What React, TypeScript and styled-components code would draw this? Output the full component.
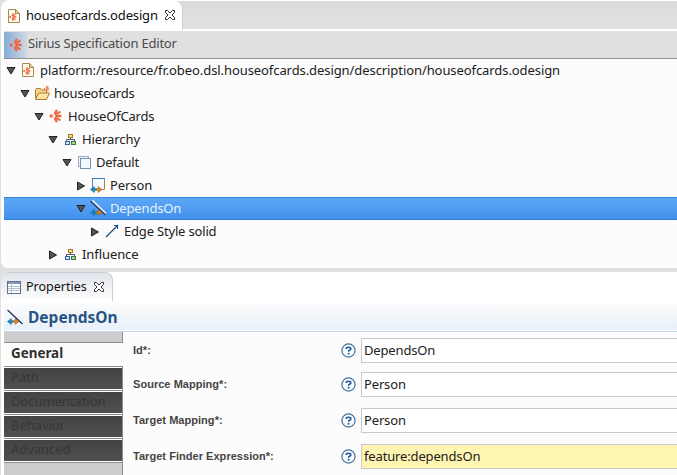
import React from "react";
import styled, { createGlobalStyle } from "styled-components";

const Global = createGlobalStyle`
  * { box-sizing: border-box; }
  html, body { margin: 0; padding: 0; background: #e0e0e0; overflow: hidden; }
  body { font-family: "Noto Sans", "Open Sans", sans-serif; font-size: 13px; color: #1f1f1f; }
  svg { display: block; flex: none; }
`;

const Window = styled.div`
  width: 677px;
  height: 475px;
  overflow: hidden;
  background: #e0e0e0;
  padding-left: 1px;
  display: flex;
  flex-direction: column;
  gap: 4px;
`;

const EditorPanel = styled.section`
  height: 268px;
  background: #fcfcfc;
  border-radius: 8px 0 0 7px;
  border: 1px solid #fff;
  border-width: 1px 0 1px 3px;
`;

const TabBar = styled.div`
  height: 30px;
  margin-left: -3px;
  display: flex;
  background: linear-gradient(#dadada, #e1e1e1);
  border-bottom: 2px solid #fff;
  border-radius: 8px 0 0 0;
`;

const EditorTab = styled.div`
  width: 182px;
  height: 29px;
  display: flex;
  align-items: center;
  padding-left: 5px;
  background: #fff;
  border-radius: 8px 8px 0 0;
  border: 1px solid #cfcfcf;
  border-width: 0 1px 0 0;
  color: #111;
`;

const Label = styled.span<{ $ls?: number; $gap?: number; $lift?: number }>`
  white-space: pre;
  line-height: 18px;
  letter-spacing: ${(p) => p.$ls ?? 0}px;
  margin-left: ${(p) => p.$gap ?? 4}px;
  padding-bottom: ${(p) => p.$lift ?? 2}px;
`;

const CloseButton = styled.span<{ $gap: number; $lift?: number }>`
  margin-left: ${(p) => p.$gap}px;
  padding-bottom: ${(p) => p.$lift ?? 0}px;
`;

const EditorTitle = styled.div`
  height: 28px;
  display: flex;
  align-items: center;
  background: #e0e0e0;
  border-bottom: 1px solid #8f8f8f;
  color: #4a4a4a;
`;

const TitleIcon = styled.div`
  width: 24px;
  height: 26px;
  padding: 5px 0 0 4px;
  background: linear-gradient(90deg, #86abd9, #d6dbe2);
`;

const TreeRow = styled.div<{ $depth: number; $selected?: boolean }>`
  height: 23px;
  display: flex;
  align-items: center;
  padding-left: ${(p) => 1.5 + p.$depth * 14}px;
  color: ${(p) => (p.$selected ? "#e6f1fd" : "#202020")};
  background: ${(p) => (p.$selected ? "linear-gradient(#5ea8f9, #4090ea)" : "transparent")};
  box-shadow: ${(p) => (p.$selected ? "inset 0 1px #3484d8, inset 0 -1px #2f7fd4" : "none")};
`;

const TreeIcon = styled.span`
  width: 16px;
  margin-left: 4.5px;
  padding-bottom: 1px;
`;

const PropertiesPanel = styled.section`
  flex: 1;
  background: #fcfcfc;
  border-radius: 8px 0 0 0;
  border-left: 3px solid #fff;
`;

const PropertiesTabBar = styled.div`
  height: 31px;
  margin-left: -3px;
  background: #fff;
  border-radius: 8px 0 0 0;
`;

const PropertiesTab = styled.div`
  width: 112px;
  height: 29px;
  display: flex;
  align-items: center;
  padding-left: 6px;
  border: 1px solid #c9cdd6;
  border-width: 1px 1px 0 0;
  border-radius: 8px 8px 0 0;
  background: linear-gradient(#e1e3ea, #fff);
  font-size: 12.5px;
  color: #111;
`;

const Heading = styled.div`
  height: 29px;
  display: flex;
  align-items: center;
  padding-left: 3px;
  background: linear-gradient(#fcfcfc, #e8f0f9 27px, #fff 27px);
  border-bottom: 1px solid #bdd8f2;
  font-size: 15.5px;
  font-weight: 700;
  color: #285585;
`;

const PropertiesBody = styled.div`
  display: flex;
  height: 143px;
`;

const Sidebar = styled.nav`
  width: 119px;
  background: #cdcdcd;
  border-right: 1px solid #8d8d8d;
`;

const SidebarTop = styled.div`
  height: 11px;
  border-bottom: 1px solid #8d8d8d;
`;

const GeneralItem = styled.div`
  height: 23px;
  width: 119px;
  padding: 0 0 3px 7px;
  display: flex;
  align-items: center;
  background: #fcfcfc;
  color: #303030;
  font-size: 13.4px;
  font-weight: 700;
`;

const SidebarItem = styled.div`
  height: 24px;
  padding: 0 0 4px 7px;
  display: flex;
  align-items: center;
  color: #363636;
  border-top: 1px solid #8d8d8d;
  background: linear-gradient(#fff 1px, #434343 1px, #505050 22px, #fff 22px);
  letter-spacing: -0.05px;
`;

const SidebarEnd = styled.div`
  border-top: 1px solid #8d8d8d;
`;

const Form = styled.div`
  flex: 1;
  display: flex;
  flex-direction: column;
  padding: 6px 0 0 10px;
`;

const FormRow = styled.div<{ $after?: number }>`
  height: 25px;
  flex: none;
  margin-bottom: ${(p) => p.$after ?? 11}px;
  display: grid;
  grid-template-columns: 207.5px 20.5px 1fr;
  align-items: center;
`;

const FieldLabel = styled.label`
  font: bold 11px/14px "Liberation Sans", Arial, sans-serif;
  letter-spacing: 0.04px;
  padding-bottom: 1px;
  color: #444;
  white-space: nowrap;
`;

const Field = styled.div<{ $expression?: boolean }>`
  height: 25px;
  display: flex;
  align-items: center;
  border: 1px solid #c9c9c9;
  border-right: 0;
  background: ${(p) => (p.$expression ? "#fff5b2" : "#fff")};
  color: #202020;
`;

const Close = () => (
  <svg width="12" height="12" viewBox="0 0 12 12" fill="#fff" stroke="#333" strokeWidth="1">
    <path d="M1.5 1.5h2l2.5 2.5l2.5-2.5h2v2L8 6l2.5 2.5v2h-2L6 8l-2.5 2.5h-2v-2L4 6L1.5 3.5z" />
  </svg>
);

const SiriusShapes = () => (
  <g fill="none" stroke="#ee663e">
    <circle cx="2.2" cy="8" r="1.7" fill="#ee663e" stroke="none" />
    <path d="M5.5 6L8 1.8M6.5 8H12.5M5.5 10L8 14.2" strokeWidth="2.3" />
    <path d="M6 6.8L11.5 3.6M6 9.2L11.5 12.4" strokeWidth="1.9" />
  </g>
);

const Sirius = () => (
  <svg width="16" height="16" viewBox="0 0 16 16"><g transform="translate(1)"><SiriusShapes /></g></svg>
);

const FileIcon = () => (
  <svg width="16" height="16" viewBox="0 0 16 16">
    <path d="M2.5 1.5h7l4 4v9h-11z" fill="#fffaf0" stroke="#a9894a" />
    <path d="M9.5 1.5v4h4z" fill="#e9d59f" stroke="#a9894a" />
    <g transform="translate(2.8 4.2) scale(.6)"><SiriusShapes /></g>
  </svg>
);

const FolderIcon = () => (
  <svg width="17" height="16" viewBox="0 0 17 16">
    <path d="M1.5 13V4.5l1-1h4l1 1.5h5V13z" fill="#f4d78e" stroke="#b27b29" />
    <path d="M1.5 14.5L4.5 8h11l-3 6.5z" fill="#fbe6a6" stroke="#b27b29" />
    <g transform="translate(9.5 0) scale(.46)"><SiriusShapes /></g>
  </svg>
);

const HierarchyIcon = () => (
  <svg width="16" height="16" viewBox="0 0 16 16">
    <path d="M8.5 6v3M4.5 11V8.5h8V11" fill="none" stroke="#44546f" />
    <rect x="6.5" y="3.5" width="4" height="3" fill="#f8dc78" stroke="#a67822" />
    <rect x="3.5" y="10.5" width="4" height="3" fill="#d5e4f7" stroke="#35639b" />
    <rect x="9.5" y="10.5" width="4" height="3" fill="#abd899" stroke="#397d3c" />
  </svg>
);

const LayersIcon = () => (
  <svg width="16" height="16" viewBox="0 0 16 16">
    <rect x="2.5" y="2.5" width="10" height="10" fill="#edf3fa" stroke="#9caec6" />
    <rect x="4.5" y="4.5" width="10" height="10" fill="#f2faff" stroke="#7890af" />
  </svg>
);

const MappingArrows = () => (
  <g>
    <path d="M.5 12.5l3.8-3v2.2h2v1.6h-2v2.2z" fill="#188ac6" stroke="#075f98" strokeWidth=".5" />
    <path d="M12 12.5l-3.8-3v2.2h-2v1.6h2v2.2z" fill="#d78720" stroke="#9b5508" strokeWidth=".5" />
  </g>
);

const ContainerIcon = () => (
  <svg width="16" height="16" viewBox="0 0 16 16">
    <path d="M2.5 12V1.5h12v11h-3" fill="#f6faff" stroke="#a88644" />
    <path d="M2 1.5h13" stroke="#3a79b7" />
    <path d="M2.5 2v10" stroke="#5c88af" />
    <MappingArrows />
  </svg>
);

const EdgeIcon = ({ selected = false }: { selected?: boolean }) => (
  <svg width="16" height="16" viewBox="0 0 16 16">
    {selected && <path d="M2 .5L16 14" stroke="#dbe6f5" strokeWidth="2.5" />}
    <path d="M.5 1L15.5 15" stroke="#222f67" strokeWidth="1.3" />
    <MappingArrows />
  </svg>
);

const StyleIcon = () => (
  <svg width="16" height="16" viewBox="0 0 16 16" fill="none" stroke="#164d83">
    <path d="M2 14L14 2" strokeWidth="1.2" /><path d="M10 2.5h3.5V6" />
  </svg>
);

const TableIcon = () => (
  <svg width="14" height="13" viewBox="0 0 14 13">
    <rect x=".5" y=".5" width="13" height="12" fill="#fff" stroke="#617393" />
    <path d="M1 2h12" stroke="#8196b9" strokeWidth="2" />
    <path d="M1 5.5h12M1 7.5h12M1 9.5h12M4.5 2v10" stroke="#b2bdcd" />
  </svg>
);

const Expander = ({ open }: { open: boolean }) => (
  <svg width="10" height="12" viewBox="0 0 10 12">
    <path d={open ? "M1 2.5h8L5 9z" : "M1.5 2v8l7-4z"} fill="#555" stroke="#222" />
  </svg>
);

const Help = () => (
  <svg width="15" height="15" viewBox="0 0 15 15">
    <circle cx="7.5" cy="7.5" r="6.6" fill="#fafdff" stroke="#417199" strokeWidth="1.2" />
    <path d="M5.2 5.9Q5.2 4.3 7.5 4.3T9.8 5.9Q9.8 6.8 8.4 7.3Q7.6 7.7 7.6 8.7" fill="none" stroke="#225b96" strokeWidth="1.6" />
    <circle cx="7.6" cy="10.7" r="1" fill="#225b96" />
  </svg>
);

type Node = { text: string; depth: number; open: boolean; icon: React.ReactNode; selected?: boolean; ls?: number };
const nodes: Node[] = [
  { text: "platform:/resource/fr.obeo.dsl.houseofcards.design/description/houseofcards.odesign", depth: 0, open: true, icon: <FileIcon /> },
  { text: "houseofcards", depth: 1, open: true, icon: <FolderIcon />, ls: -0.18 },
  { text: "HouseOfCards", depth: 2, open: true, icon: <Sirius />, ls: -0.18 },
  { text: "Hierarchy", depth: 3, open: true, icon: <HierarchyIcon /> },
  { text: "Default", depth: 4, open: true, icon: <LayersIcon />, ls: -0.25 },
  { text: "Person", depth: 5, open: false, icon: <ContainerIcon /> },
  { text: "DependsOn", depth: 5, open: true, icon: <EdgeIcon selected />, selected: true, ls: -0.15 },
  { text: "Edge Style solid", depth: 6, open: false, icon: <StyleIcon />, ls: -0.18 },
  { text: "Influence", depth: 3, open: false, icon: <HierarchyIcon /> },
];

const fields = [
  { label: "Id*:", value: "DependsOn", after: 9 },
  { label: "Source Mapping*:", value: "Person" },
  { label: "Target Mapping*:", value: "Person" },
  { label: "Target Finder Expression*:", value: "feature:dependsOn", expression: true },
];

export default function App() {
  return (
    <Window>
      <Global />
      <EditorPanel>
        <TabBar>
          <EditorTab>
            <FileIcon />
            <Label $gap={4} $ls={-0.16}>houseofcards.odesign</Label>
            <CloseButton $gap={6} $lift={2}><Close /></CloseButton>
          </EditorTab>
        </TabBar>
        <EditorTitle>
          <TitleIcon><Sirius /></TitleIcon>
          <Label $gap={0} $ls={-0.2} $lift={3}>Sirius Specification Editor</Label>
        </EditorTitle>
        {nodes.map((n) => (
          <TreeRow key={n.text} $depth={n.depth} $selected={n.selected}>
            <Expander open={n.open} /><TreeIcon>{n.icon}</TreeIcon><Label $ls={n.ls ?? -0.08}>{n.text}</Label>
          </TreeRow>
        ))}
      </EditorPanel>
      <PropertiesPanel>
        <PropertiesTabBar>
          <PropertiesTab>
            <TableIcon />
            <Label $gap={5} $lift={0}>Properties</Label>
            <CloseButton $gap={6}><Close /></CloseButton>
          </PropertiesTab>
        </PropertiesTabBar>
        <Heading><EdgeIcon /><Label $gap={5} $lift={0}>DependsOn</Label></Heading>
        <PropertiesBody>
          <Sidebar>
            <SidebarTop />
            <GeneralItem>General</GeneralItem>
            {["Path", "Documentation", "Behavior", "Advanced"].map((s) => <SidebarItem key={s}>{s}</SidebarItem>)}
            <SidebarEnd />
          </Sidebar>
          <Form>
            {fields.map((f) => (
              <FormRow key={f.label} $after={f.after}>
                <FieldLabel>{f.label}</FieldLabel><Help />
                <Field $expression={f.expression}><Label $gap={2} $ls={-0.15}>{f.value}</Label></Field>
              </FormRow>
            ))}
          </Form>
        </PropertiesBody>
      </PropertiesPanel>
    </Window>
  );
}
